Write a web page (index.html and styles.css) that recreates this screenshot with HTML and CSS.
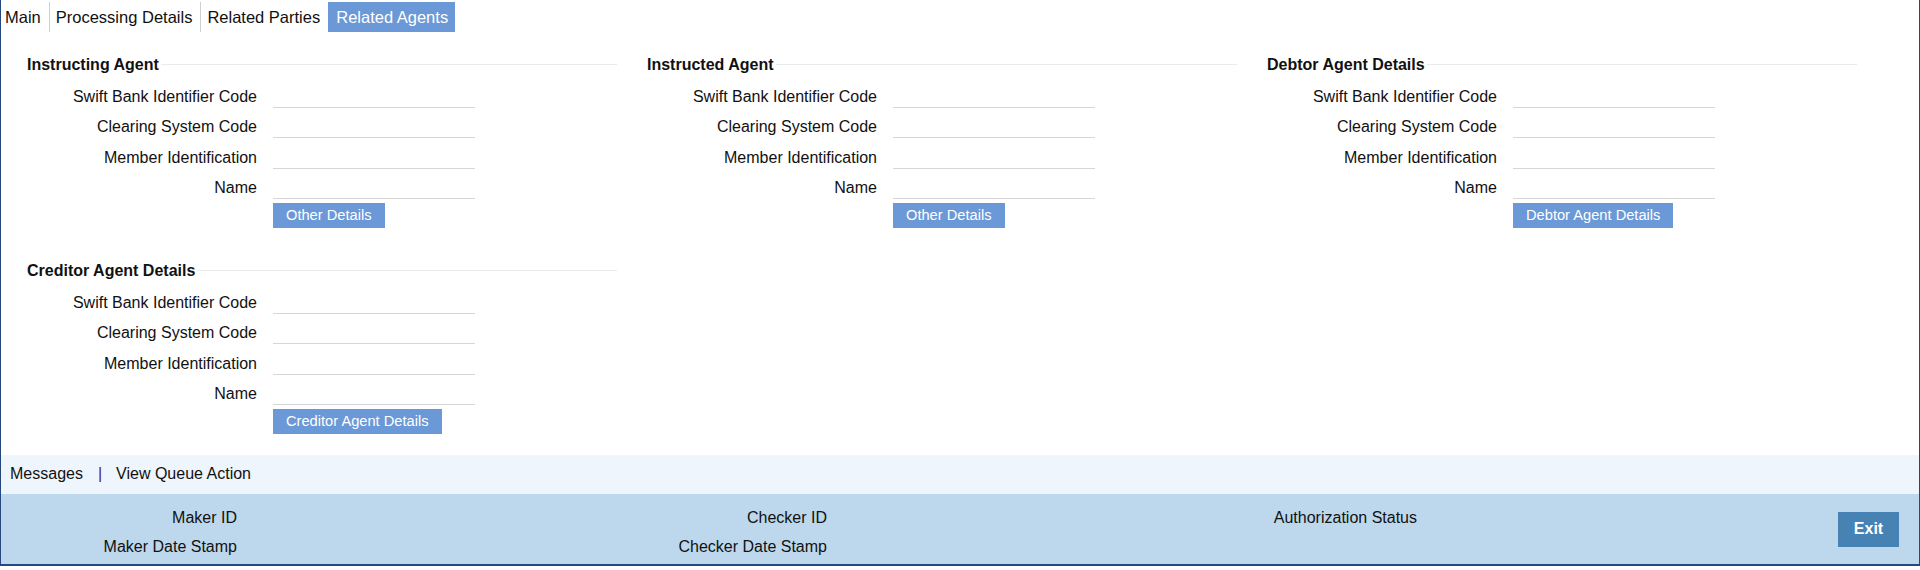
FILE: index.html
```html
<!DOCTYPE html>
<html>
<head>
<meta charset="utf-8">
<title>Related Agents</title>
<link rel="stylesheet" href="styles.css">
</head>
<body>
<div class="frame">
  <div class="tabs">
    <div class="tab first">Main</div>
    <div class="tab">Processing Details</div>
    <div class="tab">Related Parties</div>
    <div class="tab active">Related Agents</div>
  </div>

  <div class="main">
    <div class="grid">
      <section class="group">
        <div class="legend"><span class="legend-text">Instructing Agent</span><span class="legend-line"></span></div>
        <div class="row"><label class="lbl">Swift Bank Identifier Code</label><span class="inp"></span></div>
        <div class="row"><label class="lbl">Clearing System Code</label><span class="inp"></span></div>
        <div class="row"><label class="lbl">Member Identification</label><span class="inp"></span></div>
        <div class="row"><label class="lbl">Name</label><span class="inp"></span></div>
        <div class="btn-row"><button class="btn">Other Details</button></div>
      </section>

      <section class="group">
        <div class="legend"><span class="legend-text">Instructed Agent</span><span class="legend-line"></span></div>
        <div class="row"><label class="lbl">Swift Bank Identifier Code</label><span class="inp"></span></div>
        <div class="row"><label class="lbl">Clearing System Code</label><span class="inp"></span></div>
        <div class="row"><label class="lbl">Member Identification</label><span class="inp"></span></div>
        <div class="row"><label class="lbl">Name</label><span class="inp"></span></div>
        <div class="btn-row"><button class="btn">Other Details</button></div>
      </section>

      <section class="group">
        <div class="legend"><span class="legend-text">Debtor Agent Details</span><span class="legend-line"></span></div>
        <div class="row"><label class="lbl">Swift Bank Identifier Code</label><span class="inp"></span></div>
        <div class="row"><label class="lbl">Clearing System Code</label><span class="inp"></span></div>
        <div class="row"><label class="lbl">Member Identification</label><span class="inp"></span></div>
        <div class="row"><label class="lbl">Name</label><span class="inp"></span></div>
        <div class="btn-row"><button class="btn">Debtor Agent Details</button></div>
      </section>

      <section class="group">
        <div class="legend"><span class="legend-text">Creditor Agent Details</span><span class="legend-line"></span></div>
        <div class="row"><label class="lbl">Swift Bank Identifier Code</label><span class="inp"></span></div>
        <div class="row"><label class="lbl">Clearing System Code</label><span class="inp"></span></div>
        <div class="row"><label class="lbl">Member Identification</label><span class="inp"></span></div>
        <div class="row"><label class="lbl">Name</label><span class="inp"></span></div>
        <div class="btn-row"><button class="btn">Creditor Agent Details</button></div>
      </section>
    </div>
  </div>

  <div class="messages">
    <span class="msg-link">Messages</span><span class="msg-sep">|</span><span class="msg-link">View Queue Action</span>
  </div>

  <div class="footer">
    <div class="audit">
      <div class="audit-col">
        <div class="audit-lbl">Maker ID</div>
        <div class="audit-lbl">Maker Date Stamp</div>
      </div>
      <div class="audit-col">
        <div class="audit-lbl">Checker ID</div>
        <div class="audit-lbl">Checker Date Stamp</div>
      </div>
      <div class="audit-col">
        <div class="audit-lbl">Authorization Status</div>
      </div>
    </div>
    <button class="exit">Exit</button>
  </div>
</div>
</body>
</html>
```

FILE: styles.css
```css
* {
  box-sizing: border-box;
}

html, body {
  margin: 0;
  padding: 0;
  background: #ffffff;
}

body {
  font-family: "Liberation Sans", Arial, sans-serif;
  font-size: 16px;
  color: #111111;
}

.frame {
  width: 1920px;
  height: 566px;
  display: flex;
  flex-direction: column;
  border-left: 1px solid #24487f;
  border-right: 1px solid #24487f;
  border-bottom: 2px solid #24487f;
}

/* Tabs */
.tabs {
  display: flex;
  flex: none;
  margin-top: 2px;
  height: 30px;
}

.tab {
  font-size: 16.5px;
  line-height: 30px;
  padding: 0 8px 0 6px;
  color: #111111;
  border-right: 1px solid #cfcfcf;
  white-space: nowrap;
}

.tab.first {
  padding-left: 4px;
}

.tab.active {
  background: #6b98d6;
  color: #ffffff;
  border-right: none;
  padding: 0 7px 0 8px;
  margin-left: -1px;
}

/* Main content */
.main {
  flex: 1;
  min-height: 0;
}

.grid {
  display: grid;
  grid-template-columns: 590px 590px 590px;
  column-gap: 30px;
  row-gap: 33px;
  padding: 23px 0 0 26px;
}

.legend {
  display: flex;
  align-items: center;
  height: 20px;
  margin-bottom: 10px;
}

.legend-text {
  font-weight: bold;
  font-size: 16px;
  line-height: 20px;
  color: #111111;
  white-space: nowrap;
}

.legend-line {
  flex: 1;
  height: 1px;
  margin-left: 2px;
  margin-top: -1px;
  background: #ebebeb;
}

.row {
  display: flex;
  align-items: center;
  height: 23px;
  margin-top: 7.33px;
}

.lbl {
  width: 230px;
  text-align: right;
  line-height: 23px;
  white-space: nowrap;
  color: #111111;
}

.inp {
  display: block;
  width: 202px;
  height: 23px;
  margin-left: 16px;
  border-bottom: 1px solid #d6d6d6;
}

.btn-row {
  padding-left: 246px;
  margin-top: 4px;
}

.btn {
  display: block;
  height: 25px;
  padding: 0 13px;
  border: none;
  background: #6b98d6;
  color: #ffffff;
  font-family: "Liberation Sans", Arial, sans-serif;
  font-size: 14.67px;
  line-height: 25px;
  white-space: nowrap;
}

/* Messages bar */
.messages {
  flex: none;
  height: 39px;
  background: #eef5fd;
  display: flex;
  align-items: center;
  padding-left: 9px;
  padding-bottom: 1px;
}

.msg-link {
  color: #111111;
  white-space: nowrap;
}

.msg-sep {
  margin: 0 14px 0 15px;
  color: #4a235a;
}

/* Footer */
.footer {
  flex: none;
  height: 70px;
  background: #bdd8ed;
  display: flex;
  align-items: center;
  padding-right: 20px;
}

.audit {
  display: grid;
  grid-template-columns: 590px 590px 590px;
  padding-left: 6px;
  align-self: flex-start;
  padding-top: 14px;
}

.audit-col {
  display: flex;
  flex-direction: column;
  row-gap: 9px;
}

.audit-lbl {
  width: 230px;
  text-align: right;
  line-height: 20px;
  color: #111111;
  white-space: nowrap;
}

.exit {
  margin-left: auto;
  width: 61px;
  height: 35px;
  border: none;
  background: #4682b4;
  color: #ffffff;
  font-family: "Liberation Sans", Arial, sans-serif;
  font-weight: bold;
  font-size: 16px;
  padding: 0;
}
```
